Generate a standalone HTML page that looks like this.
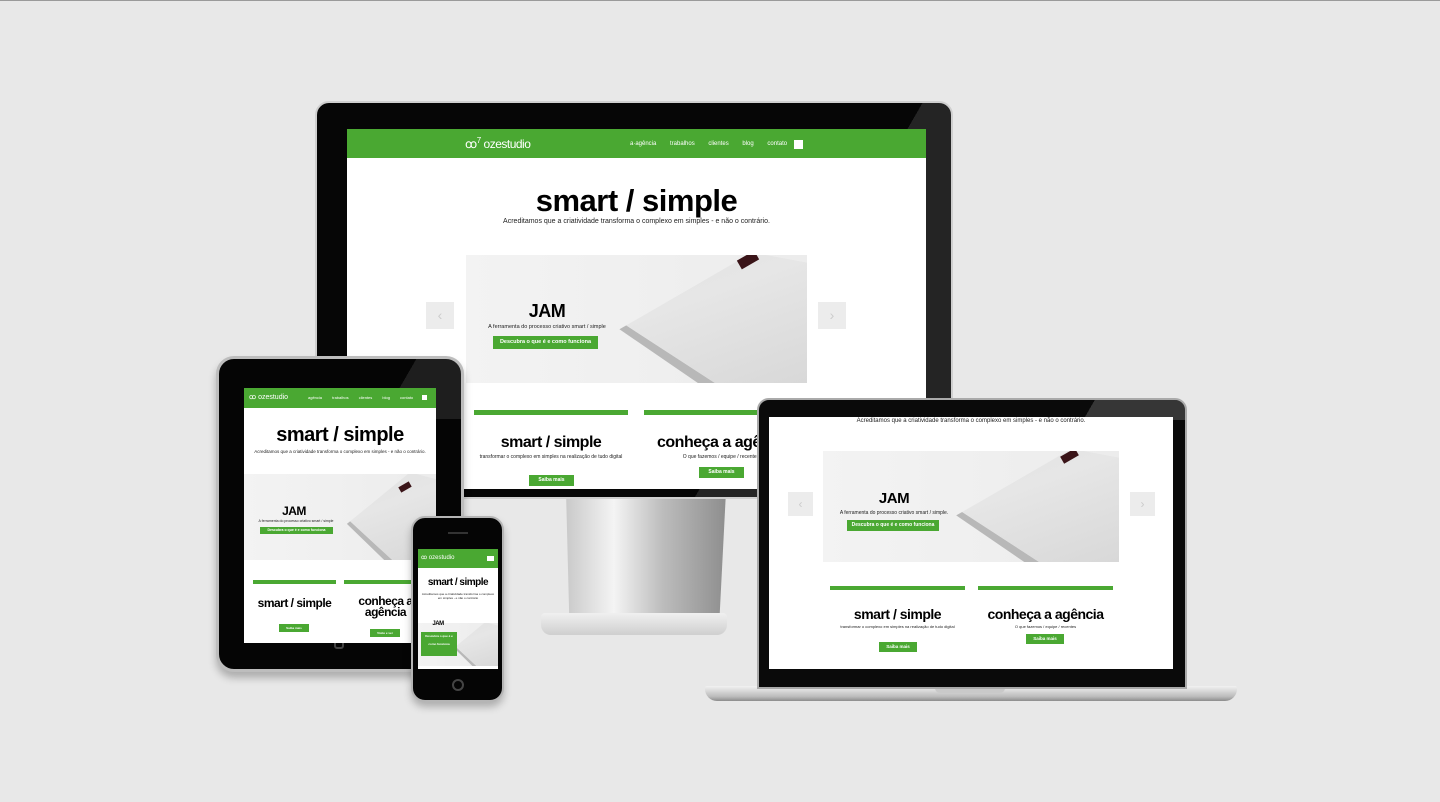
<!DOCTYPE html>
<html><head><meta charset="utf-8"><style>
*{margin:0;padding:0;box-sizing:border-box}
body{width:1440px;height:802px;background:#e8e8e8;position:relative;overflow:hidden;font-family:"Liberation Sans",sans-serif;border-top:1px solid #9a9a9a}
.a{position:absolute}
.g{background:#4aa832}
.w{background:#fff}
.t{color:#000;font-weight:bold;text-align:center;white-space:nowrap;letter-spacing:-0.5px}
.s{color:#222;text-align:center;white-space:nowrap}
.btn{background:#4aa832;color:#fff;font-weight:bold;text-align:center;white-space:nowrap}
.sl{background:linear-gradient(90deg,#f3f3f3,#ececec);overflow:hidden}
.ed{position:absolute;left:0;top:0;width:100%;height:100%;background:#b8b8b8;clip-path:polygon(45% 58%,47% 55%,73% 100%,68% 100%)}
.nb{position:absolute;left:0;top:0;width:100%;height:100%;background:linear-gradient(160deg,#dedede,#e6e6e6 50%,#d8d8d8);clip-path:polygon(47% 55%,84% -2%,100% 6%,100% 100%,73% 100%)}
.mk{position:absolute;background:#3a1418;transform:rotate(-30deg)}
.arr{background:#ececec;color:#ccc;text-align:center}
</style></head><body>

<!-- MONITOR stand -->
<div class="a" style="left:566px;top:490px;width:160px;height:125px;background:linear-gradient(90deg,#c9c9c9,#f4f4f4 30%,#bdbdbd 60%,#8e8e8e);clip-path:polygon(0 0,100% 0,96% 100%,2% 100%)"></div>
<div class="a" style="left:541px;top:612px;width:186px;height:22px;background:linear-gradient(#f0f0f0,#cfcfcf);border-radius:4px 4px 10px 10px"></div>
<!-- MONITOR body -->
<div class="a" style="left:315px;top:100px;width:638px;height:398px;background:#060606;border-radius:14px;border:2px solid #cfcfcf;overflow:hidden">
 <div class="a" style="left:330px;top:0;width:320px;height:400px;background:linear-gradient(120deg,rgba(255,255,255,0) 50%,rgba(255,255,255,.12) 50%)"></div>
</div>
<div class="a w" style="left:347px;top:128px;width:579px;height:360px;overflow:hidden">
 <div class="a g" style="left:0;top:0;width:579px;height:29px"></div>
 <div class="a" style="left:118px;top:7px;color:#fff;font-size:12px;letter-spacing:-0.5px">ꝏ<sup style="font-size:8px">7</sup> ozestudio</div>
 <div class="a" style="left:283px;top:12px;color:#fff;font-size:6px;word-spacing:12px;white-space:nowrap">a·agência trabalhos clientes blog contato</div>
 <div class="a" style="left:447px;top:11px;width:9px;height:9px;background:#fff"></div>
 <div class="a t" style="left:0;width:579px;top:54px;font-size:31px">smart / simple</div>
 <div class="a s" style="left:0;width:579px;top:89px;font-size:7px">Acreditamos que a criatividade transforma o complexo em simples - e não o contrário.</div>
 <div class="a sl" style="left:119px;top:126px;width:341px;height:128px">
  <div class="ed"></div><div class="nb"></div>
  <div class="mk" style="left:272px;top:0px;width:20px;height:10px"></div>
 </div>
 <div class="a arr" style="left:79px;top:173px;width:28px;height:27px;font-size:14px;line-height:27px">‹</div>
 <div class="a arr" style="left:471px;top:173px;width:28px;height:27px;font-size:14px;line-height:27px">›</div>
 <div class="a t" style="left:160px;width:80px;top:172px;font-size:18px">JAM</div>
 <div class="a s" style="left:130px;width:140px;top:195px;font-size:5.5px">A ferramenta do processo criativo smart / simple</div>
 <div class="a btn" style="left:146px;top:207px;width:105px;height:13px;font-size:5.5px;line-height:13px">Descubra o que é e como funciona</div>
 <div class="a g" style="left:127px;top:281px;width:154px;height:5px"></div>
 <div class="a g" style="left:297px;top:281px;width:154px;height:5px"></div>
 <div class="a t" style="left:127px;width:154px;top:305px;font-size:16px">smart / simple</div>
 <div class="a t" style="left:297px;width:200px;top:305px;font-size:16px;text-align:left;padding-left:13px">conheça a agência</div>
 <div class="a s" style="left:127px;width:154px;top:325px;font-size:5px;white-space:normal">transformar o complexo em simples na realização de tudo digital</div>
 <div class="a s" style="left:297px;width:154px;top:325px;font-size:5px">O que fazemos / equipe / recentes</div>
 <div class="a btn" style="left:182px;top:346px;width:45px;height:11px;font-size:5px;line-height:11px">Saiba mais</div>
 <div class="a btn" style="left:352px;top:338px;width:45px;height:11px;font-size:5px;line-height:11px">Saiba mais</div>
</div>

<!-- TABLET -->
<div class="a" style="left:216px;top:355px;width:248px;height:316px;background:#050505;border-radius:18px;border:3px solid #bdbdbd;box-shadow:0 6px 8px rgba(0,0,0,.25);overflow:hidden">
 <div class="a" style="left:100px;top:0;width:160px;height:60px;background:linear-gradient(120deg,rgba(255,255,255,0) 50%,rgba(255,255,255,.1) 50%)"></div>
 <div class="a" style="left:115px;top:280px;width:10px;height:10px;border:2px solid #444;border-radius:3px"></div>
</div>
<div class="a w" style="left:244px;top:387px;width:192px;height:255px;overflow:hidden">
 <div class="a g" style="left:0;top:0;width:192px;height:20px"></div>
 <div class="a" style="left:5px;top:5px;color:#fff;font-size:7px">ꝏ ozestudio</div>
 <div class="a" style="left:64px;top:7px;color:#fff;font-size:4px;word-spacing:9px;white-space:nowrap">agência trabalhos clientes blog contato</div>
 <div class="a" style="left:178px;top:7px;width:5px;height:5px;background:#fff"></div>
 <div class="a t" style="left:0;width:192px;top:36px;font-size:20px">smart / simple</div>
 <div class="a s" style="left:0;width:192px;top:61px;font-size:4.5px">Acreditamos que a criatividade transforma o complexo em simples - e não o contrário.</div>
 <div class="a sl" style="left:0;top:86px;width:192px;height:86px">
  <div class="ed" style="left:30px;width:162px"></div><div class="nb" style="left:30px;width:162px"></div>
  <div class="mk" style="left:155px;top:10px;width:12px;height:6px"></div>
 </div>
 <div class="a t" style="left:30px;width:40px;top:116px;font-size:12px">JAM</div>
 <div class="a s" style="left:12px;width:80px;top:131px;font-size:3.5px">A ferramenta do processo criativo smart / simple</div>
 <div class="a btn" style="left:16px;top:139px;width:73px;height:7px;font-size:3.5px;line-height:7px">Descubra o que é e como funciona</div>
 <div class="a g" style="left:9px;top:192px;width:83px;height:4px"></div>
 <div class="a g" style="left:100px;top:192px;width:83px;height:4px"></div>
 <div class="a t" style="left:9px;width:83px;top:208px;font-size:12px">smart / simple</div>
 <div class="a t" style="left:100px;width:83px;top:208px;font-size:12px;line-height:11px;white-space:normal">conheça a agência</div>
 <div class="a btn" style="left:35px;top:236px;width:30px;height:8px;font-size:3px;line-height:8px">Saiba mais</div>
 <div class="a btn" style="left:126px;top:241px;width:30px;height:8px;font-size:3px;line-height:8px">Visite e ver</div>
</div>

<!-- LAPTOP -->
<div class="a" style="left:705px;top:685px;width:532px;height:15px;background:linear-gradient(#f2f2f2,#bcbcbc 70%,#8c8c8c);border-radius:2px 2px 12px 12px"></div>
<div class="a" style="left:935px;top:686px;width:70px;height:6px;background:#c9c9c9;border-radius:0 0 5px 5px"></div>
<div class="a" style="left:757px;top:397px;width:430px;height:291px;background:#0a0a0a;border-radius:12px 12px 0 0;border:2px solid #aaa;overflow:hidden">
 <div class="a" style="left:200px;top:0;width:260px;height:20px;background:linear-gradient(120deg,rgba(255,255,255,0) 50%,rgba(255,255,255,.18) 50%)"></div>
</div>
<div class="a w" style="left:769px;top:416px;width:404px;height:252px;overflow:hidden">
 <div class="a s" style="left:0;width:404px;top:1px;font-size:6px">Acreditamos que a criatividade transforma o complexo em simples - e não o contrário.</div>
 <div class="a sl" style="left:54px;top:34px;width:296px;height:111px">
  <div class="ed"></div><div class="nb"></div>
  <div class="mk" style="left:238px;top:1px;width:17px;height:8px"></div>
 </div>
 <div class="a arr" style="left:19px;top:75px;width:25px;height:24px;font-size:12px;line-height:24px">‹</div>
 <div class="a arr" style="left:361px;top:75px;width:25px;height:24px;font-size:12px;line-height:24px">›</div>
 <div class="a t" style="left:100px;width:50px;top:73px;font-size:15px">JAM</div>
 <div class="a s" style="left:60px;width:130px;top:93px;font-size:5px">A ferramenta do processo criativo smart / simple.</div>
 <div class="a btn" style="left:78px;top:103px;width:92px;height:11px;font-size:5px;line-height:11px">Descubra o que é e como funciona</div>
 <div class="a g" style="left:61px;top:169px;width:135px;height:4px"></div>
 <div class="a g" style="left:209px;top:169px;width:135px;height:4px"></div>
 <div class="a t" style="left:61px;width:135px;top:189px;font-size:14px">smart / simple</div>
 <div class="a t" style="left:209px;width:135px;top:189px;font-size:14px">conheça a agência</div>
 <div class="a s" style="left:61px;width:135px;top:207px;font-size:4px;white-space:normal">transformar o complexo em simples na realização de tudo digital</div>
 <div class="a s" style="left:209px;width:135px;top:207px;font-size:4px">O que fazemos / equipe / recentes</div>
 <div class="a btn" style="left:110px;top:225px;width:38px;height:10px;font-size:4.5px;line-height:10px">Saiba mais</div>
 <div class="a btn" style="left:257px;top:217px;width:38px;height:10px;font-size:4.5px;line-height:10px">Saiba mais</div>
</div>

<!-- PHONE -->
<div class="a" style="left:411px;top:515px;width:93px;height:186px;background:#050505;border-radius:14px;border:2px solid #b5b5b5;box-shadow:0 5px 8px rgba(0,0,0,.25);overflow:hidden">
 <div class="a" style="left:35px;top:14px;width:20px;height:2px;background:#333"></div>
 <div class="a" style="left:39px;top:161px;width:12px;height:12px;border:2px solid #444;border-radius:50%"></div>
</div>
<div class="a w" style="left:418px;top:548px;width:80px;height:120px;overflow:hidden">
 <div class="a g" style="left:0;top:0;width:80px;height:19px"></div>
 <div class="a" style="left:3px;top:5px;color:#fff;font-size:6px">ꝏ ozestudio</div>
 <div class="a" style="left:69px;top:7px;width:7px;height:5px;background:#fff"></div>
 <div class="a t" style="left:0;width:80px;top:28px;font-size:10px">smart / simple</div>
 <div class="a s" style="left:2px;width:76px;top:43px;font-size:3px;white-space:normal">Acreditamos que a criatividade transforma o complexo em simples - e não o contrário</div>
 <div class="a sl" style="left:0;top:74px;width:80px;height:43px">
  <div class="ed"></div><div class="nb"></div>
 </div>
 <div class="a t" style="left:10px;width:20px;top:72px;font-size:6px">JAM</div>
 <div class="a btn" style="left:3px;top:83px;width:36px;height:24px;font-size:3px;line-height:8px;white-space:normal">Descubra o que é e como funciona</div>
</div>

</body></html>
